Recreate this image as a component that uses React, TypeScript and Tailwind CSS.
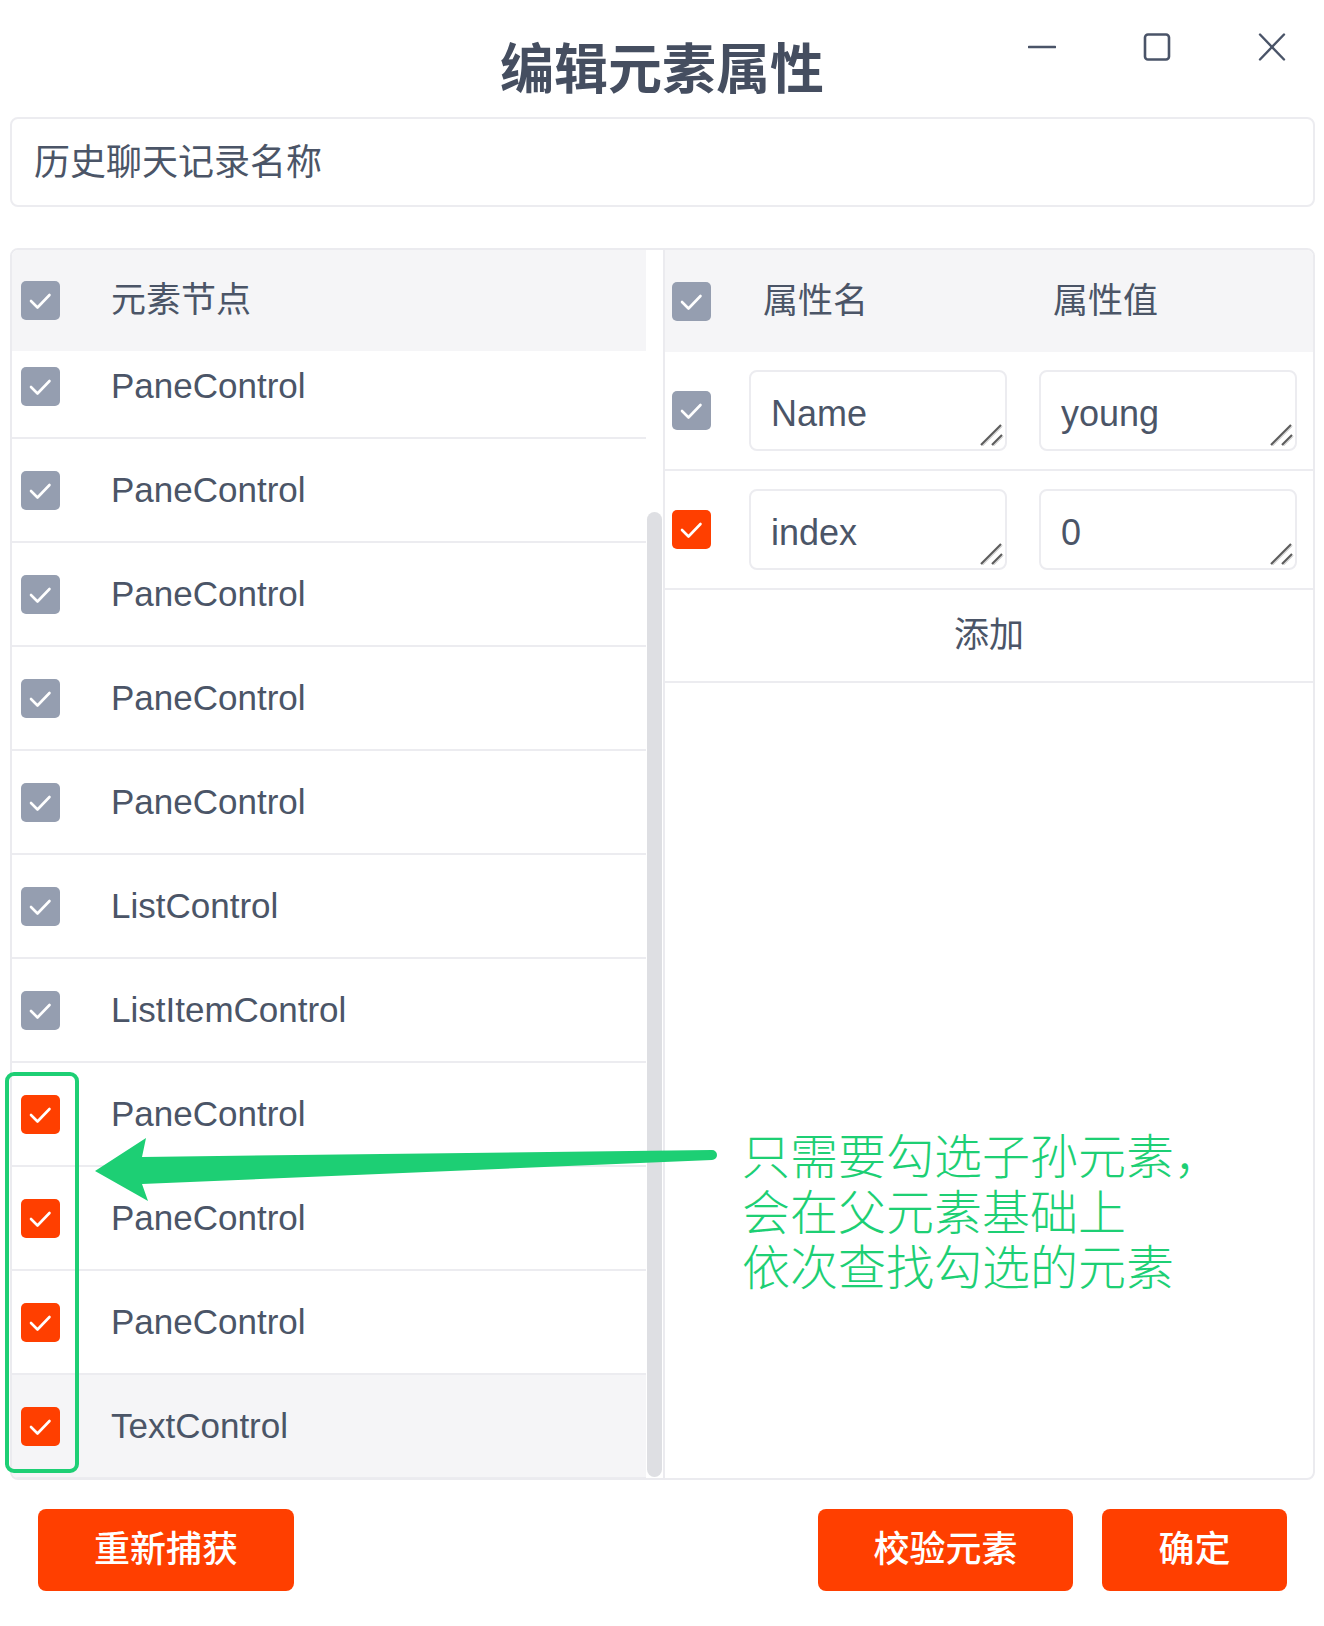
import { useState } from 'react';

interface NodeRow {
  id: number;
  name: string;
  checked: 'gray' | 'red';
}

const nodes: NodeRow[] = [
  { id: 1, name: 'PaneControl', checked: 'gray' },
  { id: 2, name: 'PaneControl', checked: 'gray' },
  { id: 3, name: 'PaneControl', checked: 'gray' },
  { id: 4, name: 'PaneControl', checked: 'gray' },
  { id: 5, name: 'PaneControl', checked: 'gray' },
  { id: 6, name: 'ListControl', checked: 'gray' },
  { id: 7, name: 'ListItemControl', checked: 'gray' },
  { id: 8, name: 'PaneControl', checked: 'red' },
  { id: 9, name: 'PaneControl', checked: 'red' },
  { id: 10, name: 'PaneControl', checked: 'red' },
  { id: 11, name: 'TextControl', checked: 'red' },
];

function CheckBox({ color }: { color: 'gray' | 'red' }) {
  return (
    <div
      className={`w-[39px] h-[39px] shrink-0 rounded-[5px] flex items-center justify-center ${
        color === 'red' ? 'bg-[#ff3f00]' : 'bg-[#959eb0]'
      }`}
    >
      <svg width="39" height="39" viewBox="0 0 39 39" fill="none">
        <polyline points="10,20 16.5,26.5 28.5,14" stroke="white" strokeWidth="2.6" strokeLinecap="round" strokeLinejoin="round" />
      </svg>
    </div>
  );
}

function Field({ value, onChange }: { value: string; onChange: (v: string) => void }) {
  return (
    <div className="relative w-[258px] h-[81px]">
      <textarea
        value={value}
        onChange={(e) => onChange(e.target.value)}
        className="w-full h-full border-2 border-[#ececf0] rounded-lg px-[20px] pt-[21px] pb-[14px] text-[36px] leading-[42px] text-[#4b5567] overflow-hidden outline-none resize-none"
      />
      {/* resize grip */}
      <svg className="absolute right-[3px] bottom-[4px] pointer-events-none" width="24" height="24" viewBox="0 0 24 24" fill="none">
        <line x1="1" y1="22" x2="21" y2="2" stroke="#5c5c5c" strokeWidth="2.2" />
        <line x1="2.5" y1="23" x2="22" y2="3.5" stroke="#b5b5b5" strokeWidth="1" />
        <line x1="12" y1="22" x2="22" y2="12" stroke="#5c5c5c" strokeWidth="2.2" />
        <line x1="13.5" y1="23" x2="23" y2="13.5" stroke="#b5b5b5" strokeWidth="1" />
      </svg>
    </div>
  );
}

export default function App() {
  const [attrs, setAttrs] = useState([
    { id: 1, key: 'Name', value: 'young', checked: 'gray' as const },
    { id: 2, key: 'index', value: '0', checked: 'red' as const },
  ]);

  const update = (i: number, field: 'key' | 'value', v: string) =>
    setAttrs(attrs.map((x, j) => (j === i ? { ...x, [field]: v } : x)));

  return (
    <div
      className="relative w-[1324px] h-[1626px] bg-white text-[#4b5567]"
      style={{ fontFamily: '"Liberation Sans", "Noto Sans CJK SC", sans-serif' }}
    >
      {/* title bar */}
      <div className="grid grid-cols-[1fr_auto_1fr] h-[117px]">
        <div />
        <h1 className="pt-[42px] text-[54px] leading-[56px] font-bold text-[#454e60]">编辑元素属性</h1>
        <div className="flex justify-end items-start gap-[87px] pt-[33px] pr-[38px] text-[#4a5468]">
          <svg width="28" height="28" viewBox="0 0 28 28" fill="none">
            <line x1="1" y1="14" x2="27" y2="14" stroke="currentColor" strokeWidth="2.6" strokeLinecap="round" />
          </svg>
          <svg width="28" height="28" viewBox="0 0 28 28" fill="none">
            <rect x="2" y="1.5" width="24" height="25" rx="3" stroke="currentColor" strokeWidth="2.6" />
          </svg>
          <svg width="28" height="28" viewBox="0 0 28 28" fill="none">
            <line x1="2" y1="1.5" x2="26" y2="26.5" stroke="currentColor" strokeWidth="2.4" strokeLinecap="round" />
            <line x1="26" y1="1.5" x2="2" y2="26.5" stroke="currentColor" strokeWidth="2.4" strokeLinecap="round" />
          </svg>
        </div>
      </div>

      {/* element name */}
      <div className="mx-[10px] mr-[9px] h-[90px] border-2 border-[#ececf0] rounded-lg flex items-center pl-[22px] text-[36px] pt-[2px]">
        历史聊天记录名称
      </div>

      {/* main table */}
      <div className="mt-[41px] ml-[10px] mr-[9px] h-[1232px] border-2 border-[#ebebef] rounded-lg overflow-hidden flex">
        <div className="w-[634px] flex flex-col">
          <div className="h-[101px] shrink-0 bg-[#f5f5f7] flex items-center pl-[9px] gap-[51px] text-[35px]">
            <CheckBox color="gray" />
            <span>元素节点</span>
          </div>
          <div className="flex-1 overflow-hidden">
            <div className="-mt-[16px]">
              {nodes.map((n) => (
                <div
                  key={n.id}
                  className={`h-[104px] border-b-2 border-[#ececf0] flex items-center pl-[9px] gap-[51px] text-[35px] ${
                    n.id === 11 ? 'bg-[#f5f5f7]' : ''
                  }`}
                >
                  <CheckBox color={n.checked} />
                  <span>{n.name}</span>
                </div>
              ))}
            </div>
          </div>
        </div>

        {/* scrollbar */}
        <div className="w-[17px] flex flex-col items-center pt-[262px] pb-[1px]">
          <div className="w-[15px] flex-1 rounded-full bg-[#dedfe3]" />
        </div>

        <div className="flex-1 border-l-2 border-[#ebebef] flex flex-col">
          <div className="h-[102px] bg-[#f5f5f7] flex items-center pl-[7px] text-[35px]">
            <CheckBox color="gray" />
            <span className="ml-[52px] w-[258px]">属性名</span>
            <span className="ml-[32px]">属性值</span>
          </div>
          {attrs.map((a, i) => (
            <div key={a.id} className="h-[119px] border-b-2 border-[#ececf0] flex items-center pl-[7px]">
              <CheckBox color={a.checked} />
              <div className="ml-[38px]">
                <Field value={a.key} onChange={(v) => update(i, 'key', v)} />
              </div>
              <div className="ml-[32px]">
                <Field value={a.value} onChange={(v) => update(i, 'value', v)} />
              </div>
            </div>
          ))}
          <button className="h-[93px] border-b-2 border-[#ececf0] flex items-center justify-center text-[35px] text-[#4b5567]">
            添加
          </button>
        </div>
      </div>

      {/* bottom buttons */}
      <div className="mt-[29px] flex justify-between pl-[38px] pr-[37px]">
        <button className="w-[256px] h-[82px] rounded-lg bg-[#ff3f00] text-white text-[36px] font-medium">重新捕获</button>
        <div className="flex gap-[29px]">
          <button className="w-[255px] h-[82px] rounded-lg bg-[#ff3f00] text-white text-[36px] font-medium">校验元素</button>
          <button className="w-[185px] h-[82px] rounded-lg bg-[#ff3f00] text-white text-[36px] font-medium">确定</button>
        </div>
      </div>

      {/* annotation overlay */}
      <div className="absolute left-[5px] top-[1072px] w-[74px] h-[401px] border-4 border-[#1dcf74] rounded-[9px] pointer-events-none" />
      <svg className="absolute left-0 top-0 pointer-events-none" width="1324" height="1626" viewBox="0 0 1324 1626">
        <path d="M95 1171 L146 1138 L142 1157 L712 1150 A5 5 0 0 1 712 1160 L142 1184 L148 1201 Z" fill="#1dcf74" />
      </svg>
      <div
        className="absolute left-[742px] top-[1126px] text-[48px] leading-[55.5px] font-light text-[#1dcf74] pointer-events-none"
        style={{ fontFamily: '"Noto Sans CJK SC", sans-serif' }}
      >
        <div>只需要勾选子孙元素，</div>
        <div>会在父元素基础上</div>
        <div>依次查找勾选的元素</div>
      </div>
    </div>
  );
}
